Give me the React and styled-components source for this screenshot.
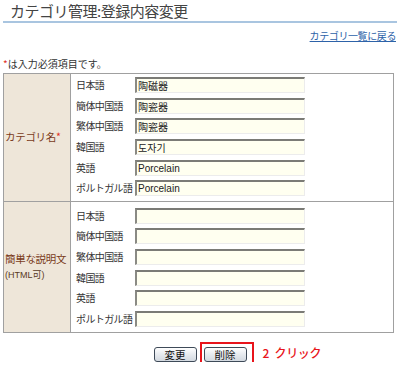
import React from "react";
import styled, { createGlobalStyle } from "styled-components";

const GlobalStyle = createGlobalStyle`
  html, body {
    margin: 0;
    padding: 0;
    background: #ffffff;
  }
  body {
    font-family: "Noto Sans CJK JP", "Noto Sans", sans-serif;
    color: #333333;
  }
`;

const nameRows = [
  { label: "日本語", value: "陶磁器" },
  { label: "簡体中国語", value: "陶瓷器" },
  { label: "繁体中国語", value: "陶瓷器" },
  { label: "韓国語", value: "도자기" },
  { label: "英語", value: "Porcelain", latin: true },
  { label: "ポルトガル語", value: "Porcelain", latin: true },
];

const descRows = ["日本語", "簡体中国語", "繁体中国語", "韓国語", "英語", "ポルトガル語"];

export default function App() {
  return (
    <Page>
      <GlobalStyle />
      <Title>カテゴリ管理:登録内容変更</Title>
      <LinkRow>
        <BackLink href="#">カテゴリ一覧に戻る</BackLink>
      </LinkRow>
      <Note>
        <Req>*</Req>は入力必須項目です。
      </Note>

      <FormTable>
        <Section $padTop={1} $padBottom={2}>
          <HeadCell>
            <HeadText>
              カテゴリ名<Req>*</Req>
            </HeadText>
          </HeadCell>
          <Fields>
            {nameRows.map((r) => (
              <Row key={r.label}>
                <Label>{r.label}</Label>
                <Field defaultValue={r.value} $latin={r.latin} />
              </Row>
            ))}
          </Fields>
        </Section>
        <Section $padTop={4} $padBottom={3} $divider>
          <HeadCell>
            <HeadText>
              簡単な説明文
              <Small>(HTML可)</Small>
            </HeadText>
          </HeadCell>
          <Fields>
            {descRows.map((l) => (
              <Row key={l}>
                <Label>{l}</Label>
                <Field defaultValue="" />
              </Row>
            ))}
          </Fields>
        </Section>
      </FormTable>

      <Actions>
        <Button>変更</Button>
        <Marked>
          <Button>削除</Button>
          <ClickNote>2 クリック</ClickNote>
        </Marked>
      </Actions>
    </Page>
  );
}

const Page = styled.div`
  width: 394px;
  padding: 0 3px;
`;

const Title = styled.h1`
  margin: 0;
  padding: 0 0 0 7px;
  height: 21px;
  font-size: 15px;
  line-height: 21px;
  font-weight: 400;
  letter-spacing: -0.5px;
  color: #444444;
  border-bottom: 2px solid #a9c5e0;
`;

const LinkRow = styled.div`
  display: flex;
  justify-content: flex-end;
  margin-top: 6px;
  padding-right: 1px;
  height: 14px;
`;

const BackLink = styled.a`
  font-size: 10px;
  line-height: 14px;
  letter-spacing: -0.4px;
  color: #2d62a8;
  text-decoration: underline;
`;

const Note = styled.p`
  margin: 14px 0 0;
  font-size: 10px;
  line-height: 14px;
  color: #333333;
`;

const Req = styled.span`
  color: #e0301e;
`;

const FormTable = styled.div`
  margin: 2px 3px 0 0;
  border: 1px solid #a0a0a0;
`;

const Section = styled.div`
  display: grid;
  grid-template-columns: 67px 1fr;
  border-top: ${(p) => (p.$divider ? "1px solid #a0a0a0" : "none")};

  & > div:last-child {
    padding-top: ${(p) => p.$padTop}px;
    padding-bottom: ${(p) => p.$padBottom}px;
  }
`;

const HeadCell = styled.div`
  display: flex;
  align-items: center;
  padding-left: 1px;
  background: #eee6d9;
  border-right: 1px solid #a0a0a0;
`;

const HeadText = styled.div`
  font-size: 10.5px;
  line-height: 16px;
  letter-spacing: -0.3px;
  color: #7a3b1b;
  white-space: nowrap;
`;

const Small = styled.span`
  display: block;
  font-family: "Liberation Sans", "Noto Sans CJK JP", sans-serif;
  font-size: 9px;
  line-height: 16px;
  letter-spacing: 0;
  color: #5a3a24;
`;

const Fields = styled.div`
  display: flex;
  flex-direction: column;
  padding-left: 5px;
`;

const Row = styled.div`
  display: flex;
  align-items: center;
  height: 20.6px;
`;

const Label = styled.span`
  width: 59px;
  flex: none;
  font-size: 10px;
  line-height: 14px;
  letter-spacing: -0.6px;
  color: #333333;
  white-space: nowrap;
`;

const Field = styled.input`
  box-sizing: border-box;
  width: 170px;
  height: 16px;
  padding: 0 1px;
  margin: 0;
  background: #fffff0;
  border-style: solid;
  border-width: 2px 1px 1px 2px;
  border-color: #7b7b76 #ececec #ececec #8a8a84;
  font-family: ${(p) =>
    p.$latin ? '"Liberation Sans", sans-serif' : '"Noto Sans CJK JP", "Noto Sans CJK KR", sans-serif'};
  font-size: 10px;
  line-height: 12px;
  color: #222222;
  outline: none;
`;

const Actions = styled.div`
  display: flex;
  justify-content: center;
  gap: 7px;
  margin-top: 14px;
`;

const Button = styled.button`
  width: 43px;
  height: 15px;
  padding: 0;
  border: 1px solid #3e4a58;
  border-radius: 3px;
  background: linear-gradient(#ffffff, #e9ecf0 45%, #d3d9e0);
  font-family: "Noto Sans CJK JP", sans-serif;
  font-size: 10.5px;
  line-height: 13px;
  color: #111111;
  cursor: pointer;
`;

const Marked = styled.span`
  position: relative;
  display: inline-flex;

  &::after {
    content: "";
    position: absolute;
    inset: -5px -7px -4px -4px;
    border: 2px solid #e8141b;
    pointer-events: none;
  }
`;

const ClickNote = styled.span`
  position: absolute;
  left: calc(100% + 16px);
  top: -2px;
  white-space: nowrap;
  font-size: 12px;
  line-height: 16px;
  font-weight: 500;
  letter-spacing: -0.3px;
  word-spacing: 3px;
  color: #e8141b;
`;
